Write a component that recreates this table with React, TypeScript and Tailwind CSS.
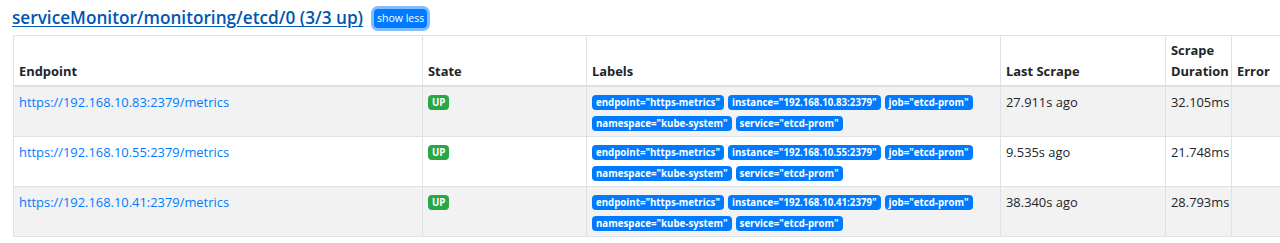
import React from 'react';

const targets = [
  { ip: '192.168.10.83', last: '27.911s ago', dur: '32.105ms' },
  { ip: '192.168.10.55', last: '9.535s ago', dur: '21.748ms' },
  { ip: '192.168.10.41', last: '38.340s ago', dur: '28.793ms' },
];

function Badge({ children, color = 'bg-[#007bff]' }: { children: React.ReactNode; color?: string }) {
  return (
    <span className={`${color} inline-flex items-center h-[15px] text-white font-bold text-[9.7px] leading-none px-[4px] rounded-[4px] whitespace-nowrap`}>
      {children}
    </span>
  );
}

export default function App() {
  return (
    <div className="w-[1280px] h-[243px] overflow-hidden bg-white text-[#212529] text-[12.9px] leading-[21px] font-['Open_Sans',sans-serif]">
      {/* pool header */}
      <div className="flex items-center pl-[12px] pt-[6px] h-[30px]">
        <a className="text-[17.2px] font-semibold text-[#0056b3] underline underline-offset-2 leading-none">
          serviceMonitor/monitoring/etcd/0 (3/3 up)
        </a>
        <button className="ml-[11px] bg-[#007bff] text-white text-[10.5px] leading-[17px] px-[3px] py-[1px] rounded-[4px] ring-[3px] ring-[#80bdff]">
          show less
        </button>
      </div>

      <div className="pl-[13px] pt-[5px]">
        <table className="table-fixed border-collapse w-[1350px]">
          <colgroup>
            <col className="w-[409px]" />
            <col className="w-[164px]" />
            <col className="w-[414px]" />
            <col className="w-[165px]" />
            <col className="w-[66px]" />
            <col className="w-[132px]" />
          </colgroup>
          <thead>
            <tr className="text-left">
              {['Endpoint', 'State', 'Labels', 'Last Scrape', 'Scrape Duration', 'Error'].map((h) => (
                <th key={h} className="border border-[#dee2e6] border-b-2 align-bottom font-bold px-[5px] pt-[4px] pb-[3px]">
                  {h}
                </th>
              ))}
            </tr>
          </thead>
          <tbody>
            {targets.map((t, i) => (
              <tr key={t.ip} className={i % 2 === 0 ? 'bg-[#f2f2f2]' : 'bg-white'}>
                <td className="border border-[#dee2e6] align-top px-[5px] pt-[5px] pb-[5px]">
                  <a className="text-[#007bff]">https://{t.ip}:2379/metrics</a>
                </td>
                <td className="border border-[#dee2e6] align-top px-[5px] pt-[5px] pb-[5px]">
                  <div className="flex mt-[3px]">
                    <Badge color="bg-[#28a745]">UP</Badge>
                  </div>
                </td>
                <td className="border border-[#dee2e6] align-top px-[5px] pt-[5px] pb-[5px]">
                  <div className="flex flex-wrap gap-x-[4px] gap-y-[6px] mt-[3px]">
                    <Badge>endpoint="https-metrics"</Badge>
                    <Badge>instance="{t.ip}:2379"</Badge>
                    <Badge>job="etcd-prom"</Badge>
                    <Badge>namespace="kube-system"</Badge>
                    <Badge>service="etcd-prom"</Badge>
                  </div>
                </td>
                <td className="border border-[#dee2e6] align-top px-[5px] pt-[5px] pb-[5px]">{t.last}</td>
                <td className="border border-[#dee2e6] align-top px-[5px] pt-[5px] pb-[5px]">{t.dur}</td>
                <td className="border border-[#dee2e6] align-top px-[5px] pt-[5px] pb-[5px]"></td>
              </tr>
            ))}
          </tbody>
        </table>
      </div>
    </div>
  );
}
